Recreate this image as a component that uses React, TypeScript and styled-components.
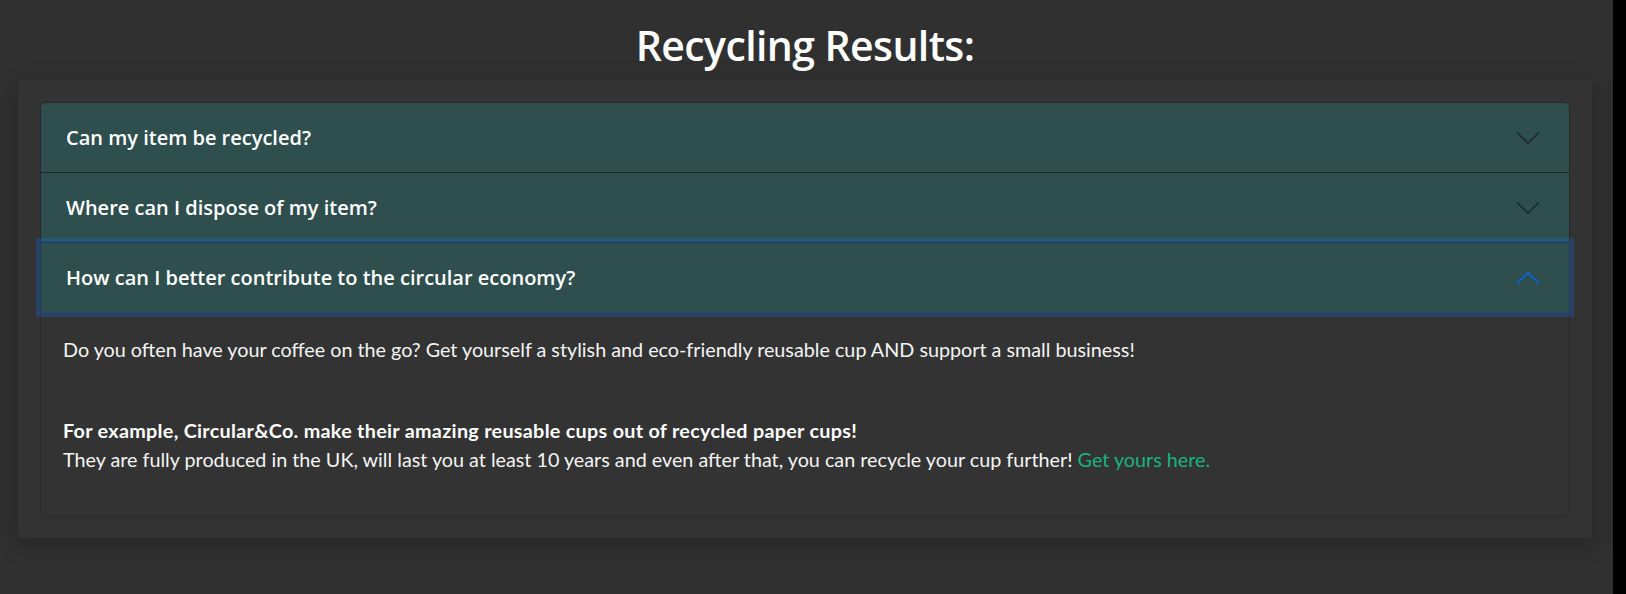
import React from "react";
import styled, { createGlobalStyle } from "styled-components";

const GlobalStyle = createGlobalStyle`
  html, body { margin: 0; padding: 0; background: #303030; }
  * { box-sizing: border-box; }
`;

const Page = styled.div`
  display: flex;
  width: 100%;
  min-height: 594px;
  background: #303030;
`;

const Main = styled.main`
  flex: 1;
  display: flex;
  flex-direction: column;
  padding: 16px 21px 0 18px;
`;

const ScrollTrack = styled.div`
  width: 13px;
  flex: none;
  background: #000;
`;

const Title = styled.h1`
  margin: 0 0 6px;
  text-align: center;
  font-family: "Open Sans", "Noto Sans", sans-serif;
  font-weight: 600;
  font-size: 41px;
  letter-spacing: -0.6px;
  line-height: 58px;
  color: #fff;
`;

const Card = styled.section`
  background: #333333;
  padding: 22px 22px 21px;
  border-radius: 4px;
  box-shadow: 0 6px 24px rgba(0, 0, 0, 0.22);
`;

const Accordion = styled.div`
  border-radius: 6px;
  border: 1px solid rgba(0, 0, 0, 0.18);
  display: flex;
  flex-direction: column;
`;

const Item = styled.div<{ $last?: boolean }>`
  position: relative;
  border-bottom: ${(p) => (p.$last ? "none" : "1px solid #222626")};
  &:first-child > button {
    border-top-left-radius: 5px;
    border-top-right-radius: 5px;
  }
`;

const HeaderButton = styled.button<{ $focused?: boolean }>`
  position: relative;
  z-index: ${(p) => (p.$focused ? 3 : 1)};
  display: flex;
  align-items: center;
  justify-content: space-between;
  width: 100%;
  height: 69px;
  padding: 0 27px 0 25px;
  border: 0;
  background: #2f4f4f;
  color: #fff;
  font-family: "Open Sans", "Noto Sans", sans-serif;
  font-weight: 600;
  font-size: 20px;
  letter-spacing: 0;
  text-align: left;
  cursor: pointer;
  box-shadow: ${(p) => (p.$focused ? "0 0 0 5px rgba(13, 110, 253, 0.25)" : "none")};
`;

const Chevron = styled.svg<{ $open?: boolean }>`
  width: 28px;
  height: 28px;
  flex: none;
  fill: ${(p) => (p.$open ? "#0c63e4" : "#1f2a2e")};
  transform: ${(p) => (p.$open ? "rotate(180deg)" : "none")};
`;

const Body = styled.div`
  padding: 23px 22px 26px 22px;
  font-family: Lato, "Open Sans", sans-serif;
  font-size: 19.75px;
  line-height: 29px;
  color: #f4f4f4;
  border-bottom-left-radius: 5px;
  border-bottom-right-radius: 5px;
`;

const Para = styled.p<{ $gap?: number }>`
  margin: 0 0 ${(p) => p.$gap ?? 16}px;
`;

const Strong = styled.strong`
  font-weight: 700;
  letter-spacing: 0.3px;
  color: #fff;
`;

const Link = styled.a`
  color: #19b383;
  text-decoration: none;
`;

const ChevronIcon = ({ open }: { open?: boolean }) => (
  <Chevron $open={open} viewBox="0 0 16 16" aria-hidden>
    <path
      fillRule="evenodd"
      d="M1.646 4.646a.5.5 0 0 1 .708 0L8 10.293l5.646-5.647a.5.5 0 0 1 .708.708l-6 6a.5.5 0 0 1-.708 0l-6-6a.5.5 0 0 1 0-.708z"
    />
  </Chevron>
);

const questions = [
  "Can my item be recycled?",
  "Where can I dispose of my item?",
  "How can I better contribute to the circular economy?",
];

export default function App() {
  return (
    <>
      <GlobalStyle />
      <Page>
        <Main>
          <Title>Recycling Results:</Title>
          <Card>
            <Accordion>
              {questions.map((q, i) => {
                const open = i === 2;
                return (
                  <Item key={q} $last={open}>
                    <HeaderButton $focused={open}>
                      <span>{q}</span>
                      <ChevronIcon open={open} />
                    </HeaderButton>
                    {open && (
                      <Body>
                        <Para $gap={52}>
                          Do you often have your coffee on the go? Get yourself a stylish and
                          eco-friendly reusable cup AND support a small business!
                        </Para>
                        <Para $gap={16}>
                          <Strong>
                            For example, Circular&amp;Co. make their amazing reusable cups out of
                            recycled paper cups!
                          </Strong>
                          <br />
                          They are fully produced in the UK, will last you at least 10 years and
                          even after that, you can recycle your cup further!{" "}
                          <Link href="#">Get yours here.</Link>
                        </Para>
                      </Body>
                    )}
                  </Item>
                );
              })}
            </Accordion>
          </Card>
        </Main>
        <ScrollTrack />
      </Page>
    </>
  );
}
